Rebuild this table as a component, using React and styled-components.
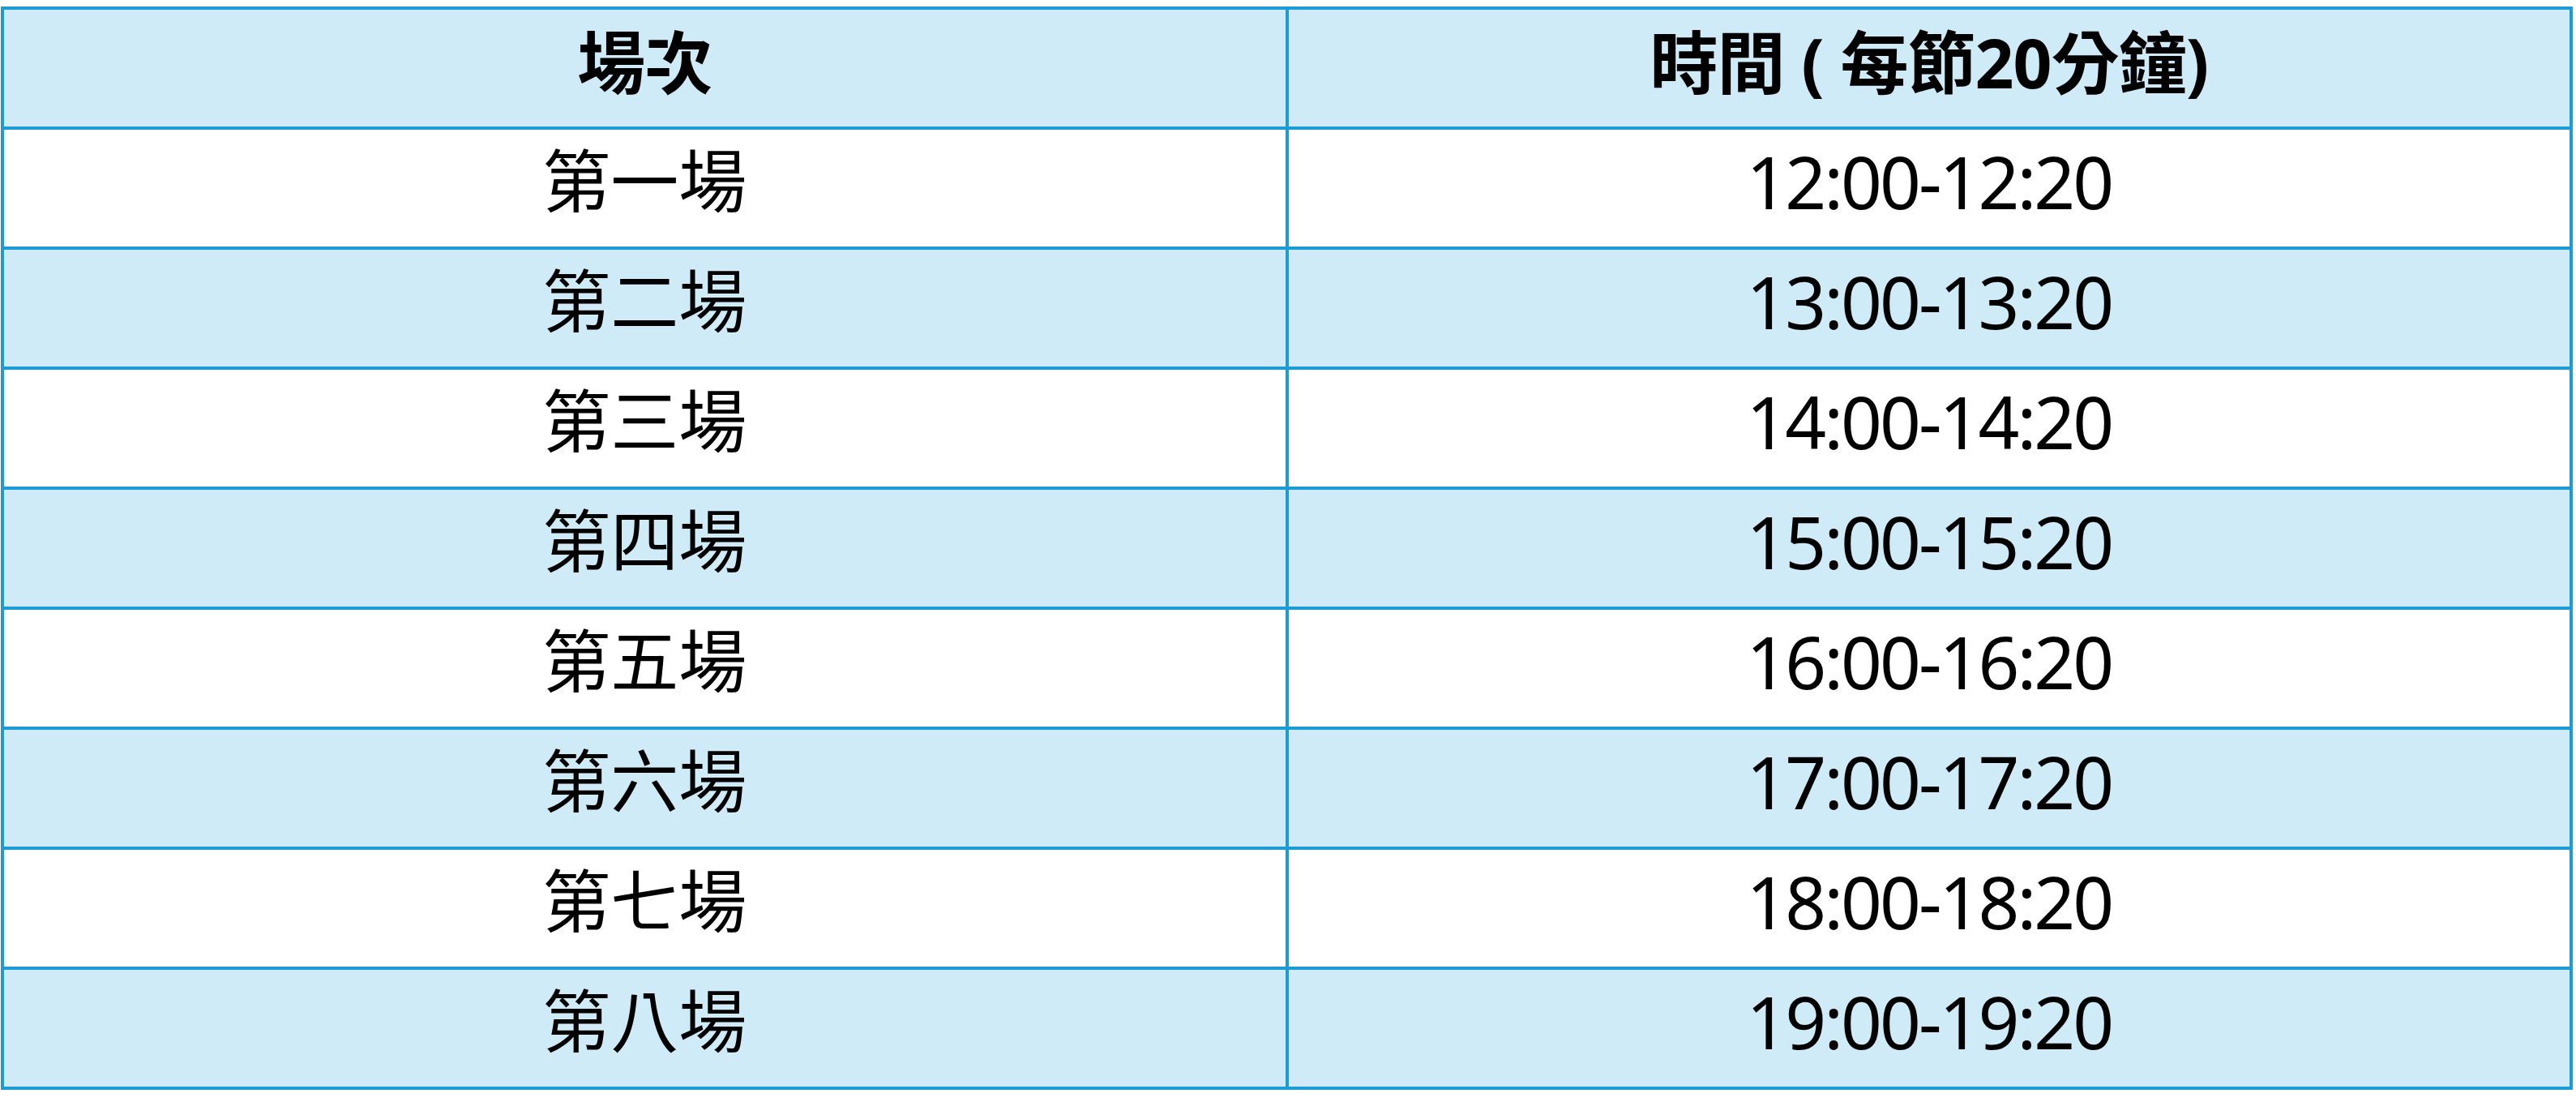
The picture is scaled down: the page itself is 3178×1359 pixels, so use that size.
import React from "react";
import styled, { createGlobalStyle } from "styled-components";

const GlobalStyle = createGlobalStyle`
  html, body {
    margin: 0;
    padding: 0;
    background: #ffffff;
  }
  body {
    font-family: "Noto Sans", "Noto Sans CJK TC", sans-serif;
    color: #000000;
  }
`;

const Page = styled.div`
  padding: 8px 0 0 1px;
`;

const Table = styled.table`
  width: 3173px;
  border-collapse: separate;
  border-spacing: 4px;
  background: #1c9bd4;
  table-layout: fixed;
`;

const HeadCell = styled.th`
  height: 130px;
  padding: 0 0 14px;
  background: #cfebf7;
  font-size: 84px;
  font-weight: 700;
  text-align: center;
  vertical-align: middle;
  line-height: 1;
  letter-spacing: -1px;
`;

const Cell = styled.td`
  height: 126px;
  padding: 0 0 18px;
  background: ${(p) => (p.$shade ? "#cfebf7" : "#ffffff")};
  font-size: ${(p) => (p.$time ? "89px" : "84px")};
  font-weight: 400;
  text-align: center;
  vertical-align: middle;
  line-height: 1;
  letter-spacing: ${(p) => (p.$time ? "-3px" : "0")};
`;

const sessions = [
  ["第一場", "12:00-12:20"],
  ["第二場", "13:00-13:20"],
  ["第三場", "14:00-14:20"],
  ["第四場", "15:00-15:20"],
  ["第五場", "16:00-16:20"],
  ["第六場", "17:00-17:20"],
  ["第七場", "18:00-18:20"],
  ["第八場", "19:00-19:20"],
];

const App = () => {
  return (
    <Page>
      <GlobalStyle />
      <Table>
        <thead>
          <tr>
            <HeadCell>場次</HeadCell>
            <HeadCell>時間 ( 每節20分鐘)</HeadCell>
          </tr>
        </thead>
        <tbody>
          {sessions.map(([name, time], i) => (
            <tr key={name}>
              <Cell $shade={i % 2 === 1}>{name}</Cell>
              <Cell $shade={i % 2 === 1} $time>
                {time}
              </Cell>
            </tr>
          ))}
        </tbody>
      </Table>
    </Page>
  );
};

export default App;
